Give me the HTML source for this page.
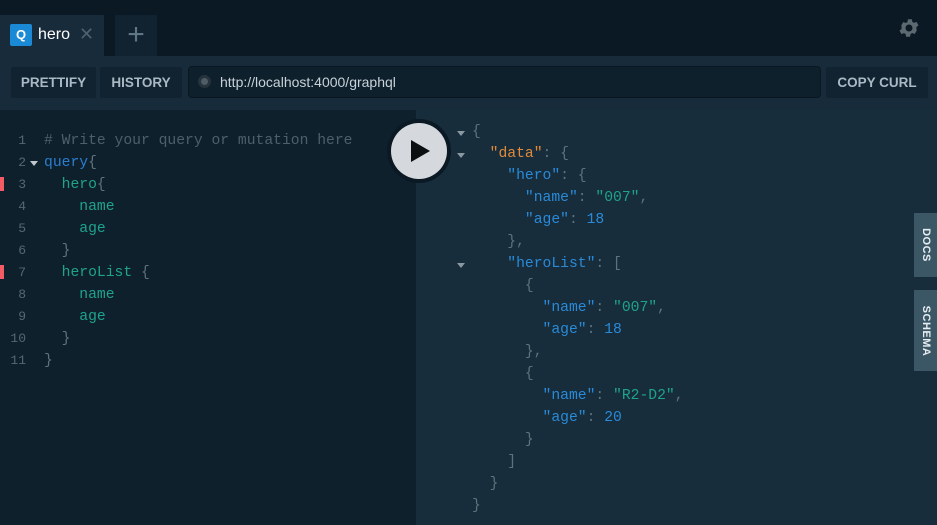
<!DOCTYPE html>
<html><head><meta charset="utf-8"><style>
*{margin:0;padding:0;box-sizing:border-box}
body{width:937px;height:525px;overflow:hidden;background:#0b1924;font-family:"Liberation Sans",sans-serif;position:relative}
.abs{position:absolute}
.tab{left:0;top:15px;width:104px;height:41px;background:#172b3a}
.q{left:10px;top:24px;width:22px;height:22px;background:#1a8ad6;color:#fff;font-weight:bold;font-size:13px;text-align:center;line-height:22px;border-radius:2px}
.tabt{left:38px;top:26px;color:#fff;font-size:16px}
.x{left:79px;top:24px;color:#4d6170;font-size:18px}
.plus{left:115px;top:15px;width:42px;height:41px;background:#112331;color:#5f7684;font-size:30px;text-align:center;line-height:40px}
.bar{left:0;top:56px;width:937px;height:54px;background:#172b3a}
.btn{top:67px;height:31px;background:#112331;color:#a9bac4;font-size:13.5px;font-weight:bold;letter-spacing:0;line-height:31px;text-align:center;border-radius:2px}
.url{left:188px;top:66px;width:633px;height:32px;background:#0f202d;border:1px solid #0a1620;border-radius:4px;color:#c8d2d8;font-size:14px;line-height:30px;padding-left:31px}
.dot{left:198px;top:75px;width:13px;height:13px;border-radius:50%;background:#4e5c66;border:3px solid #26333d}
.left{left:0;top:110px;width:416px;height:415px;background:#0f202d}
.right{left:416px;top:110px;width:521px;height:415px;background:#172d3b}
.code{font-family:"Liberation Mono",monospace;font-size:14.7px;line-height:22px;white-space:pre}
.ln{color:#566673;font-size:13px;text-align:right;width:26px}
.c{color:#4e5f6c}.k{color:#2a7ed0}.f{color:#1fa38a}.p{color:#5f717d}.s{color:#1fa38a}.n{color:#2a8ad8}.o{color:#e08a3a}
.mark{left:0;width:4px;height:14px;background:#f25c66}
.play{left:387px;top:119px;width:64px;height:64px;border-radius:50%;background:#0b1924}
.play2{left:391px;top:123px;width:56px;height:56px;border-radius:50%;background:#d5d9dd}
.side{left:914px;width:23px;background:#3b5766;color:#e7eef2;font-size:11px;font-weight:bold;letter-spacing:.5px}
.side span{position:absolute;left:50%;top:50%;transform:translate(-50%,-50%) rotate(90deg);white-space:nowrap}
.tri{width:0;height:0;border-left:4px solid transparent;border-right:4px solid transparent;border-top:5px solid #8a98a2}
</style></head><body>
<div class="abs tab"></div>
<div class="abs q">Q</div>
<div class="abs tabt">hero</div>
<div class="abs x">✕</div>
<div class="abs plus">+</div>
<svg class="abs" style="left:897px;top:16px" width="24" height="24" viewBox="0 0 24 24"><path fill="#5d6970" d="M19.4 13a7.5 7.5 0 0 0 0-2l2.1-1.6-2-3.5-2.5 1a7.3 7.3 0 0 0-1.7-1l-.4-2.6h-4l-.4 2.7a7.3 7.3 0 0 0-1.7 1l-2.5-1-2 3.4L4.6 11a7.5 7.5 0 0 0 0 2l-2.1 1.6 2 3.5 2.5-1a7.3 7.3 0 0 0 1.7 1l.4 2.6h4l.4-2.7a7.3 7.3 0 0 0 1.7-1l2.5 1 2-3.4zM12 15.5a3.5 3.5 0 1 1 0-7 3.5 3.5 0 0 1 0 7z"/></svg>
<div class="abs bar"></div>
<div class="abs btn" style="left:11px;width:85px">PRETTIFY</div>
<div class="abs btn" style="left:100px;width:82px">HISTORY</div>
<div class="abs url">http://localhost:4000/graphql</div>
<div class="abs dot"></div>
<div class="abs btn" style="left:826px;width:102px">COPY CURL</div>
<div class="abs left"></div>
<div class="abs right"></div>
<div class="abs code ln" style="left:0;top:130px">1
2
3
4
5
6
7
8
9
10
11</div>
<div class="abs mark" style="top:177px"></div>
<div class="abs mark" style="top:265px"></div>
<div class="abs tri" style="left:30px;top:161px;border-top-color:#c0c8ce"></div>
<div class="abs code" style="left:44px;top:130px"><span class="c"># Write your query or mutation here</span>
<span class="k">query</span><span class="p">{</span>
  <span class="f">hero</span><span class="p">{</span>
    <span class="f">name</span>
    <span class="f">age</span>
  <span class="p">}</span>
  <span class="f">heroList</span> <span class="p">{</span>
    <span class="f">name</span>
    <span class="f">age</span>
  <span class="p">}</span>
<span class="p">}</span></div>
<div class="abs code" style="left:472px;top:121px"><span class="p">{</span>
  <span class="o">"data"</span><span class="p">: {</span>
    <span class="n">"hero"</span><span class="p">: {</span>
      <span class="n">"name"</span><span class="p">: </span><span class="s">"007"</span><span class="p">,</span>
      <span class="n">"age"</span><span class="p">: </span><span class="n">18</span>
    <span class="p">},</span>
    <span class="n">"heroList"</span><span class="p">: [</span>
      <span class="p">{</span>
        <span class="n">"name"</span><span class="p">: </span><span class="s">"007"</span><span class="p">,</span>
        <span class="n">"age"</span><span class="p">: </span><span class="n">18</span>
      <span class="p">},</span>
      <span class="p">{</span>
        <span class="n">"name"</span><span class="p">: </span><span class="s">"R2-D2"</span><span class="p">,</span>
        <span class="n">"age"</span><span class="p">: </span><span class="n">20</span>
      <span class="p">}</span>
    <span class="p">]</span>
  <span class="p">}</span>
<span class="p">}</span></div>
<div class="abs tri" style="left:457px;top:131px"></div>
<div class="abs tri" style="left:457px;top:153px"></div>
<div class="abs tri" style="left:457px;top:263px"></div>
<div class="abs play"></div>
<div class="abs play2"></div>
<svg class="abs" style="left:409px;top:139px" width="22" height="24" viewBox="0 0 22 24"><path d="M2 1 L21 12 L2 23Z" fill="#0b0f12"/></svg>
<div class="abs side" style="top:213px;height:64px"><span>DOCS</span></div>
<div class="abs side" style="top:290px;height:81px"><span>SCHEMA</span></div>
</body></html>
